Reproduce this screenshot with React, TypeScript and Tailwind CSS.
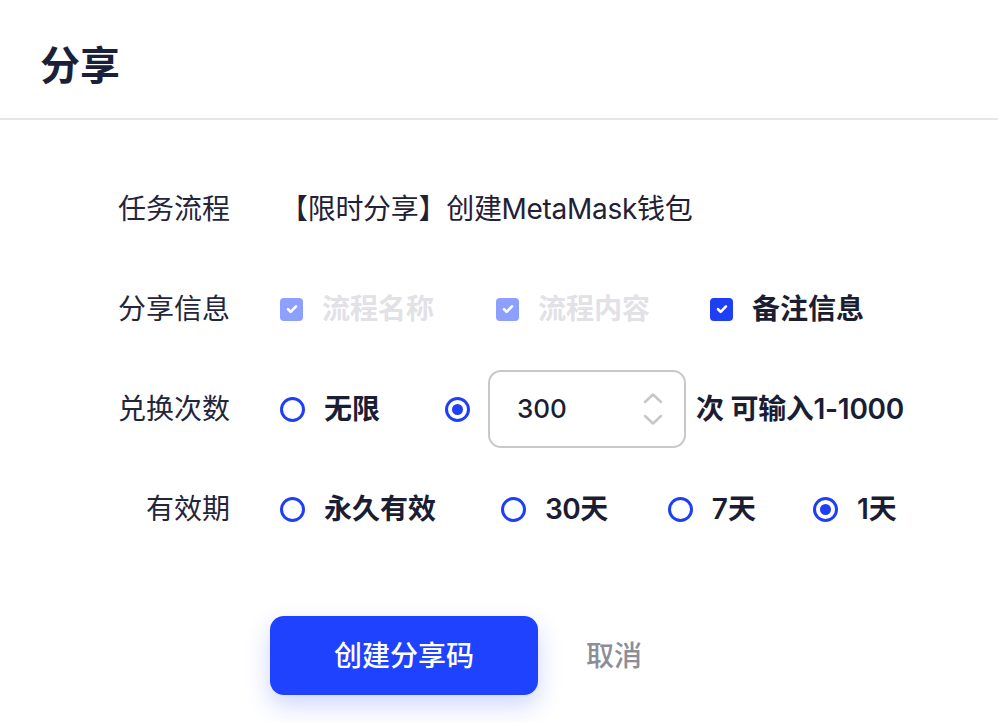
import React from 'react';

const FONT = "font-['Inter','Noto_Sans_CJK_SC',sans-serif]";

function Check({ disabled }: { disabled?: boolean }) {
  return (
    <span
      className={`w-[23px] h-[23px] rounded-[4px] flex items-center justify-center shrink-0 ${
        disabled ? 'bg-[#8d9fff]' : 'bg-[#1f3ff5]'
      }`}
    >
      <svg width="14" height="14" viewBox="0 0 14 14" fill="none">
        <path d="M3 7.2l2.7 2.6L11 4.4" stroke="white" strokeWidth="2.6" strokeLinecap="round" strokeLinejoin="round" />
      </svg>
    </span>
  );
}

function Radio({ checked }: { checked?: boolean }) {
  return (
    <span className="w-[25px] h-[25px] rounded-full border-[3px] border-[#1f3ff5] bg-white flex items-center justify-center shrink-0">
      {checked && <span className="w-[11px] h-[11px] rounded-full bg-[#1f3ff5]" />}
    </span>
  );
}

function Row({ label, children }: { label: string; children: React.ReactNode }) {
  return (
    <div className="h-[100px] flex items-center">
      <div className="w-[230px] text-right text-[28px] text-[#23253a] leading-none">{label}</div>
      <div className="ml-[50px] flex items-center">{children}</div>
    </div>
  );
}

export default function App() {
  return (
    <div className={`w-[998px] h-[722px] bg-white ${FONT}`}>
      {/* header */}
      <div className="h-[120px] border-b-2 border-[#e6e6e6] pl-[40px] pt-[46px]">
        <h1 className="text-[40px] font-bold text-[#1c1f3a] leading-none">分享</h1>
      </div>

      <div className="pt-[39px]">
        <Row label="任务流程">
          <span className="text-[28px] text-[#1f2136] leading-none tracking-[-0.3px]">【限时分享】创建MetaMask钱包</span>
        </Row>

        <Row label="分享信息">
          <div className="flex items-center gap-[19px]">
            <Check disabled />
            <span className="text-[28px] font-semibold text-[#e1e1e6] leading-none">流程名称</span>
          </div>
          <div className="flex items-center gap-[19px] ml-[62px]">
            <Check disabled />
            <span className="text-[28px] font-semibold text-[#e1e1e6] leading-none">流程内容</span>
          </div>
          <div className="flex items-center gap-[19px] ml-[60px]">
            <Check />
            <span className="text-[28px] font-semibold text-[#1b1d33] leading-none">备注信息</span>
          </div>
        </Row>

        <Row label="兑换次数">
          <div className="flex items-center gap-[19px]">
            <Radio />
            <span className="text-[28px] font-semibold text-[#1b1d33] leading-none">无限</span>
          </div>
          <div className="flex items-center ml-[65px]">
            <Radio checked />
            <div className="ml-[18px] w-[198px] h-[78px] border-2 border-[#c8c8c8] rounded-[13px] flex items-center justify-between pl-[27px] pr-[21px]">
              <span className="text-[26px] font-medium text-[#1b1d33] leading-none">300</span>
              <div className="flex flex-col items-center gap-[10px]">
                <svg width="20" height="12" viewBox="0 0 20 12" fill="none">
                  <path d="M2 10l8-7.5 8 7.5" stroke="#c6c6c6" strokeWidth="2.4" strokeLinecap="round" strokeLinejoin="round" />
                </svg>
                <svg width="20" height="12" viewBox="0 0 20 12" fill="none">
                  <path d="M2 2l8 7.5 8-7.5" stroke="#c6c6c6" strokeWidth="2.4" strokeLinecap="round" strokeLinejoin="round" />
                </svg>
              </div>
            </div>
            <span className="ml-[10px] text-[28px] font-semibold text-[#1b1d33] leading-none tracking-[-0.3px]">次 可输入1-1000</span>
          </div>
        </Row>

        <Row label="有效期">
          <div className="flex items-center gap-[19px]">
            <Radio />
            <span className="text-[28px] font-semibold text-[#1b1d33] leading-none">永久有效</span>
          </div>
          <div className="flex items-center gap-[19px] ml-[65px]">
            <Radio />
            <span className="text-[28px] font-semibold text-[#1b1d33] leading-none tracking-[-0.5px]">30天</span>
          </div>
          <div className="flex items-center gap-[19px] ml-[60px]">
            <Radio />
            <span className="text-[28px] font-semibold text-[#1b1d33] leading-none">7天</span>
          </div>
          <div className="flex items-center gap-[19px] ml-[57px]">
            <Radio checked />
            <span className="text-[28px] font-semibold text-[#1b1d33] leading-none">1天</span>
          </div>
        </Row>

        {/* actions */}
        <div className="mt-[57px] pl-[270px] flex items-center">
          <button className="w-[268px] h-[79px] rounded-[14px] bg-[#1f42ff] text-white text-[28px] font-medium shadow-[0_10px_24px_rgba(31,66,255,0.22)]">
            创建分享码
          </button>
          <button className="ml-[48px] text-[28px] text-[#8b8e99] font-medium">取消</button>
        </div>
      </div>
    </div>
  );
}
